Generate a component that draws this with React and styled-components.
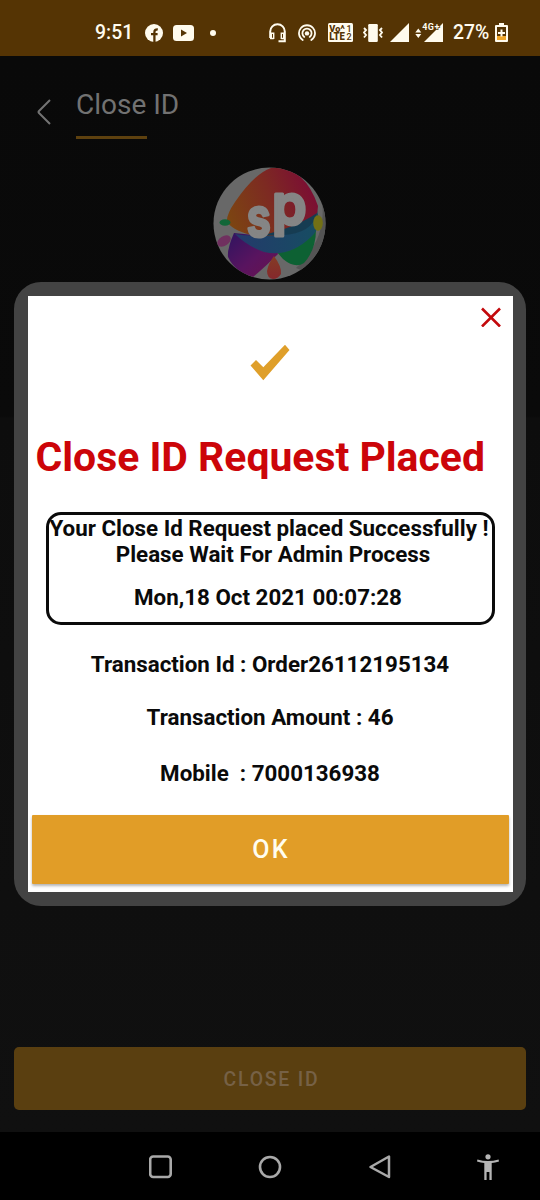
import React from "react";
import styled, { createGlobalStyle } from "styled-components";

const GlobalStyle = createGlobalStyle`
  * { box-sizing: border-box; }
  body { margin: 0; background: #000; font-family: Roboto, "Liberation Sans", sans-serif; }
  svg { display: block; flex: none; }
`;

const Phone = styled.div`
  position: relative;
  display: flex;
  flex-direction: column;
  width: 540px;
  height: 1200px;
  overflow: hidden;
`;

const StatusBar = styled.header`
  display: flex;
  justify-content: space-between;
  align-items: center;
  height: 56px;
  padding: 9px 32px 0 95px;
  background: #553404;
  color: #fffbee;
`;

const StatusGroup = styled.div`
  display: flex;
  align-items: center;
  gap: ${(p) => p.$gap}px;
`;

const StatusText = styled.span`
  width: ${(p) => p.$width}px;
  font-size: 19.4px;
  font-weight: 500;
  line-height: 24px;
  white-space: nowrap;
`;

const Screen = styled.main`
  display: flex;
  flex-direction: column;
  height: 1076px;
  background: linear-gradient(#090909 0, #0a0a0a 360px, #0d0d0d 362px, #101010 100%);
`;

const TitleBar = styled.div`
  display: flex;
  height: 111px;
  padding: 32px 36px 0;
  gap: 25px;
`;

const BackIcon = styled.svg`
  margin-top: 10px;
`;

const ScreenTitle = styled.h1`
  margin: 0;
  height: 51px;
  color: #727272;
  font-size: 28px;
  font-weight: 400;
  line-height: 34px;

  &::after {
    content: "";
    display: block;
    width: 71px;
    height: 3px;
    margin-top: 14px;
    background: #5e410f;
  }
`;

const Logo = styled.svg`
  align-self: center;
  margin-right: 1px;
`;

const CloseIdButton = styled.button`
  margin: auto 14px 22px;
  height: 63px;
  padding: 2px 0 0 3px;
  border: 0;
  border-radius: 5px;
  background: #5a3f10;
  color: #766146;
  font: 500 19.4px Roboto, sans-serif;
  letter-spacing: 1.8px;
`;

const NavBar = styled.nav`
  display: flex;
  align-items: center;
  height: 68px;
  padding: 2px 40px 0 149px;
  justify-content: space-between;
  background: #000;
`;

const Dialog = styled.section`
  position: absolute;
  left: 14px;
  top: 282px;
  width: 512px;
  height: 624px;
  padding: 14px 13.5px;
  border-radius: 27px;
  background: #434343;
`;

const DialogBody = styled.div`
  display: flex;
  flex-direction: column;
  align-items: center;
  height: 100%;
  background: #fff;
  color: #0a0a0a;
`;

const CloseIcon = styled.svg`
  align-self: flex-end;
  margin: 11px 11.5px 0 0;
`;

const CheckIcon = styled.svg`
  margin-top: 17px;
`;

const DialogTitle = styled.h2`
  align-self: flex-start;
  margin: 51px 0 0 8px;
  color: #cc0509;
  font-size: 40.9px;
  font-weight: 700;
  line-height: 48px;
  white-space: nowrap;
`;

const Notice = styled.div`
  width: 449px;
  height: 113px;
  margin-top: 31px;
  border: 3px solid #0a0a0a;
  border-radius: 15px;
`;

const Line = styled.p`
  margin: ${(p) => p.$top || 0}px -10px 0 ${(p) => p.$left || -10}px;
  font-size: 22.35px;
  font-weight: 700;
  line-height: 26px;
  text-align: center;
  white-space: pre;
`;

const OkButton = styled.button`
  width: 477px;
  height: 69px;
  margin-top: auto;
  margin-bottom: 8px;
  padding: 0 0 0 2px;
  border: 0;
  border-radius: 1px;
  background: #e19d27;
  box-shadow: 0 2px 3px rgba(0, 0, 0, 0.3);
  color: #fffdf0;
  font: 500 25px Roboto, sans-serif;
  letter-spacing: 2.2px;
`;

const Facebook = () => (
  <svg width="18" height="18" viewBox="0 0 18 18">
    <circle cx="9" cy="9" r="9" fill="#fffbee" />
    <path d="M9.4 18V8.2q0-3 3.4-2.8M6 10.2h6.6" fill="none" stroke="#553404" strokeWidth="2.3" />
  </svg>
);

const YouTube = () => (
  <svg width="21" height="16" viewBox="0 0 21 16">
    <rect width="21" height="16" rx="3.5" fill="#fffbee" />
    <path d="M8 4.6v6.8l6-3.4z" fill="#553404" />
  </svg>
);

const Dot = () => (
  <svg width="24" height="6" viewBox="0 0 24 6">
    <circle cx="9" cy="3" r="3" fill="#fffbee" />
  </svg>
);

const Headset = () => (
  <svg width="17" height="20" viewBox="0 0 17 20">
    <path d="M1.2 15V8.5a7.3 7.3 0 0 1 14.6 0v9.8H9.5M1.2 15.2h3.5M15.8 15.2h-3.5" fill="none" stroke="#fffbee" strokeWidth="2" />
    <path d="M1 9.5h4.4V16H1zM11.6 9.5H16V16h-4.4z" fill="#fffbee" />
    <path d="M3 11h1v3.7H3zM13 11h1v3.7h-1z" fill="#553404" />
  </svg>
);

const Hotspot = () => (
  <svg width="18" height="18" viewBox="0 0 18 18">
    <g fill="none" stroke="#fffbee" strokeWidth="1.8" strokeLinecap="round">
      <path d="M4.7 16A8 8 0 1 1 13.3 16" />
      <path d="M6.3 12.9a4.6 4.6 0 1 1 5.4 0" />
    </g>
    <circle cx="9" cy="9.4" r="2.2" fill="#fffbee" />
  </svg>
);

const VoLte = () => (
  <svg width="25" height="19" viewBox="0 0 25 19">
    <rect width="25" height="19" rx="1.5" fill="#fffbee" />
    <g fill="#553404" fontFamily="Roboto, sans-serif" fontWeight="900">
      <text x="1.3" y="8.6" fontSize="9.3" textLength="11" lengthAdjust="spacingAndGlyphs">Vo</text>
      <text x="12.4" y="6" fontSize="6">A</text>
      <text x="1.3" y="17.4" fontSize="10" textLength="15.5" lengthAdjust="spacingAndGlyphs">LTE</text>
      <text x="18.6" y="8.6" fontSize="9" fontWeight="500">1</text>
      <text x="18.6" y="17.4" fontSize="9" fontWeight="500">2</text>
    </g>
  </svg>
);

const Vibrate = () => (
  <svg width="20" height="18" viewBox="0 0 20 18">
    <rect x="5.2" y="0" width="9.6" height="18" rx="1.2" fill="#fffbee" />
    <path d="M1 4l2 2-2 2.5 2 2.5-2 2.5M19 4l-2 2 2 2.5-2 2.5 2 2.5" fill="none" stroke="#fffbee" strokeWidth="1.9" />
  </svg>
);

const Signal = () => (
  <svg width="19" height="19" viewBox="0 0 19 19">
    <path d="M19 0v19H0z" fill="#fffbee" />
  </svg>
);

const DataSignal = () => (
  <svg width="28" height="21" viewBox="0 0 28 21">
    <path d="M28 1v19H9z" fill="#fffbee" />
    <path d="M3.3 6.5l3 4h-6zM3.3 16l3-4h-6z" fill="#fffbee" />
    <text x="7.3" y="8.4" fontSize="9" fontWeight="700" fontFamily="Roboto, sans-serif" fill="#fffbee" stroke="#553404" strokeWidth="1.6" paintOrder="stroke" textLength="17">4G+</text>
  </svg>
);

const Battery = () => (
  <svg width="13" height="19" viewBox="0 0 13 19">
    <path d="M4 0h5v2h3q1 0 1 1v15q0 1-1 1H1q-1 0-1-1V3q0-1 1-1h3z" fill="#fffbee" />
    <path d="M2 4h9v9H2z" fill="#553404" />
    <path d="M2 13h9v4H2z" fill="#efa62a" />
    <path d="M6.5 6.5v7M3 10h7" stroke="#fffbee" strokeWidth="2" />
  </svg>
);

const SpLogo = () => (
  <Logo width="113" height="113" viewBox="0 0 113 113">
    <defs>
      <clipPath id="disc"><circle cx="56.5" cy="56.5" r="56" /></clipPath>
      <linearGradient id="warm" x1="0" y1="0.65" x2="1" y2="0.35">
        <stop offset="0" stopColor="#7c4412" />
        <stop offset="0.5" stopColor="#7d2a22" />
        <stop offset="1" stopColor="#7b0b35" />
      </linearGradient>
      <linearGradient id="violet" x1="0" y1="0" x2="1" y2="1">
        <stop offset="0" stopColor="#2f1460" />
        <stop offset="0.55" stopColor="#59145f" />
        <stop offset="1" stopColor="#69124e" />
      </linearGradient>
      <linearGradient id="sea" x1="0" y1="0" x2="1" y2="0">
        <stop offset="0" stopColor="#243a6b" />
        <stop offset="1" stopColor="#164d62" />
      </linearGradient>
      <linearGradient id="drop" x1="0" y1="0" x2="0" y2="1">
        <stop offset="0" stopColor="#843c25" />
        <stop offset="1" stopColor="#85282c" />
      </linearGradient>
    </defs>
    <g clipPath="url(#disc)">
      <rect width="113" height="113" fill="#686868" />
      <path d="M109 35Q114 72 83 101L113 113V35z" fill="#545454" />
      <path d="M21 66Q14 82 15 90Q22 105 40 110Q51 101 65 87L60 70z" fill="url(#violet)" />
      <path d="M103 62Q103 83 91 96Q82 102 70 92L63 84Q83 77 103 62z" fill="#0d6133" />
      <path d="M22 67Q44 71 69 65Q91 61 104 43Q109 61 98 70Q76 91 51 85Q34 79 22 67z" fill="url(#sea)" />
      <path d="M14 55Q13 48 22 35Q41 7 58 1Q91-2 105 39Q105 51 96 57Q79 68 55 69Q25 69 14 55z" fill="url(#warm)" />
      <path d="M46 69Q82 61 104 46Q99 67 69 68z" fill="#163c52" />
      <ellipse cx="12" cy="55.5" rx="5.5" ry="3.2" fill="#126638" />
      <ellipse cx="11" cy="74" rx="7.5" ry="4.7" transform="rotate(-33 11 74)" fill="#70305f" />
      <ellipse cx="105" cy="56" rx="4.8" ry="7.7" fill="#727016" />
      <path d="M61 89Q69 100 68 107Q65 112 60 112Q54 111 54 104Q55 97 61 89z" fill="url(#drop)" />
      <g fontFamily="Inter, Roboto, sans-serif" fontWeight="600" fill="#858585" stroke="#858585" strokeWidth="3.2" strokeLinejoin="round">
        <text x="33.8" y="69.5" fontSize="55" textLength="24" lengthAdjust="spacingAndGlyphs">s</text>
        <text x="59" y="57.5" fontSize="56" textLength="34.5" lengthAdjust="spacingAndGlyphs">p</text>
      </g>
    </g>
  </Logo>
);

export default function App() {
  return (
    <Phone>
      <GlobalStyle />
      <StatusBar>
        <StatusGroup $gap={10}>
          <StatusText $width={40}>9:51</StatusText>
          <Facebook />
          <YouTube />
          <Dot />
        </StatusGroup>
        <StatusGroup $gap={10}>
          <StatusGroup $gap={12}>
            <Headset />
            <Hotspot />
            <VoLte />
          </StatusGroup>
          <StatusGroup $gap={6.5}>
            <Vibrate />
            <Signal />
            <DataSignal />
          </StatusGroup>
          <StatusGroup $gap={6}>
            <StatusText $width={36}>27%</StatusText>
            <Battery />
          </StatusGroup>
        </StatusGroup>
      </StatusBar>

      <Screen>
        <TitleBar>
          <BackIcon width="15" height="28" viewBox="0 0 15 28">
            <path d="M14 2L3 13q-1 1 0 2l11 11" fill="none" stroke="#737373" strokeWidth="2" />
          </BackIcon>
          <ScreenTitle>Close ID</ScreenTitle>
        </TitleBar>
        <SpLogo />
        <CloseIdButton>CLOSE ID</CloseIdButton>
      </Screen>

      <NavBar>
        <svg width="24" height="24" viewBox="0 0 24 24">
          <rect x="1.2" y="1.5" width="20.5" height="20.5" rx="3" fill="none" stroke="#a9a9a9" strokeWidth="2.6" />
        </svg>
        <svg width="24" height="24" viewBox="0 0 24 24">
          <circle cx="12" cy="12" r="10" fill="none" stroke="#a9a9a9" strokeWidth="2.6" />
        </svg>
        <svg width="24" height="24" viewBox="0 0 24 24">
          <path d="M22 1.5v20.5L3.5 12z" fill="none" stroke="#a9a9a9" strokeWidth="2.5" strokeLinejoin="round" />
        </svg>
        <svg width="24" height="26" viewBox="0 0 24 26">
          <circle cx="12" cy="2.8" r="2.6" fill="#b5b5b5" />
          <path d="M1.4 5.5Q12 8.5 22.6 5.5L23 7.5Q19 8.8 15.7 9V26h-2.3v-8h-2.8v8H8.3V9Q5 8.8 1 7.5z" fill="#b5b5b5" />
        </svg>
      </NavBar>

      <Dialog>
        <DialogBody>
          <CloseIcon width="20" height="20" viewBox="0 0 20 20">
            <path d="M1 1.5l18 18M19 1.5L1 19.5" stroke="#c3090c" strokeWidth="2.6" />
          </CloseIcon>
          <CheckIcon width="40" height="38" viewBox="0 0 40 38">
            <path d="M0.5 21.5L6 16L13.3 23.2L35 0.8L39.5 6L13.3 36.2z" fill="#df9f2a" />
          </CheckIcon>
          <DialogTitle>Close ID Request Placed</DialogTitle>
          <Notice>
            <Line $left={-12}>Your Close Id Request placed Successfully !</Line>
            <Line $left={-4}>Please Wait For Admin Process</Line>
            <Line $top={17} $left={-14}>Mon,18 Oct 2021 00:07:28</Line>
          </Notice>
          <Line $top={26}>Transaction Id : Order26112195134</Line>
          <Line $top={27}>Transaction Amount : 46</Line>
          <Line $top={30}>Mobile  : 7000136938</Line>
          <OkButton>OK</OkButton>
        </DialogBody>
      </Dialog>
    </Phone>
  );
}
